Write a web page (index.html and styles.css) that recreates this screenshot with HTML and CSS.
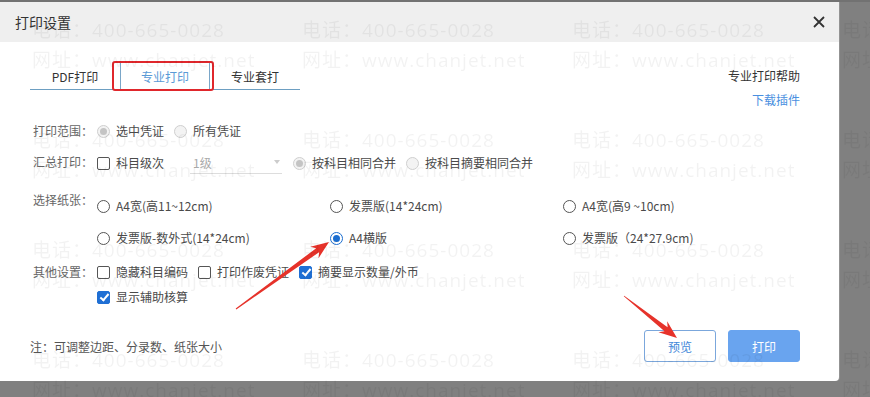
FILE: index.html
```html
<!DOCTYPE html>
<html lang="zh-CN">
<head>
    <meta charset="UTF-8">
    <title>打印设置</title>
    <link rel="stylesheet" href="styles.css">
</head>
<body>
    <div class="topbar"></div>
    <div class="dialog">
        <div class="dialog-head">
            <span class="dialog-title">打印设置</span>
            <a class="close" href="#"><svg width="12" height="12" viewBox="0 0 12 12"><path d="M1 1L11 11M11 1L1 11" stroke="#333" stroke-width="1.8" fill="none"/></svg></a>
        </div>
        <div class="dialog-body">
            <div class="top">
                <ul class="tabs">
                    <li>PDF打印</li>
                    <li class="active">专业打印<span class="mark"></span></li>
                    <li>专业套打</li>
                </ul>
                <div class="help">
                    <a href="#">专业打印帮助</a>
                    <a href="#" class="link">下载插件</a>
                </div>
            </div>

            <div class="form">
                <div class="row">
                    <span class="label">打印范围：</span>
                    <div class="opts">
                        <span class="opt"><i class="radio off on"></i>选中凭证</span>
                        <span class="opt"><i class="radio off"></i>所有凭证</span>
                    </div>
                </div>
                <div class="row row-sum">
                    <span class="label">汇总打印：</span>
                    <div class="opts">
                        <span class="opt"><i class="check"></i>科目级次</span>
                        <span class="select">1级<i class="caret"></i></span>
                        <span class="opt"><i class="radio off on"></i>按科目相同合并</span>
                        <span class="opt"><i class="radio off"></i>按科目摘要相同合并</span>
                    </div>
                </div>
                <div class="row row-paper">
                    <span class="label">选择纸张：</span>
                    <div class="paper">
                        <span class="opt"><i class="radio"></i>A4宽(高11~12cm)</span>
                        <span class="opt"><i class="radio"></i>发票版(14*24cm)</span>
                        <span class="opt"><i class="radio"></i>A4宽(高9 ~10cm)</span>
                        <span class="opt"><i class="radio"></i>发票版-数外式(14*24cm)</span>
                        <span class="opt"><i class="radio on"></i>A4横版</span>
                        <span class="opt"><i class="radio"></i>发票版（24*27.9cm)</span>
                    </div>
                </div>
                <div class="row row-other">
                    <span class="label">其他设置：</span>
                    <div class="opts wrap">
                        <span class="opt"><i class="check"></i>隐藏科目编码</span>
                        <span class="opt"><i class="check"></i>打印作废凭证</span>
                        <span class="opt"><i class="check on"></i>摘要显示数量/外币</span>
                        <span class="opt"><i class="check on"></i>显示辅助核算</span>
                    </div>
                </div>
            </div>

            <div class="foot">
                <span class="note">注：可调整边距、分录数、纸张大小</span>
                <div class="btns">
                    <a href="#" class="btn">预览</a>
                    <a href="#" class="btn btn-primary">打印</a>
                </div>
            </div>
        </div>
    </div>

    <!-- annotation arrows -->
    <svg class="arrows" width="870" height="397" viewBox="0 0 870 397">
        <polygon points="235.7,308.6 316.2,248.2 310.3,246.8 329,242 318.5,258.2 319.1,252.2 236.3,309.4" fill="#e6322a"/>
        <polygon points="624.2,295.7 667.6,327.3 667.2,321.3 677,338 658.5,332.3 664.5,331.3 623.8,296.3" fill="#e6322a"/>
    </svg>

    <div class="watermark">
        <div class="wm"><p>电话：400-665-0028</p><p>网址：www.chanjet.net</p></div>
        <div class="wm"><p>电话：400-665-0028</p><p>网址：www.chanjet.net</p></div>
        <div class="wm"><p>电话：400-665-0028</p><p>网址：www.chanjet.net</p></div>
        <div class="wm"><p>电话：400-665-0028</p><p>网址：www.chanjet.net</p></div>
        <div class="wm"><p>电话：400-665-0028</p><p>网址：www.chanjet.net</p></div>
        <div class="wm"><p>电话：400-665-0028</p><p>网址：www.chanjet.net</p></div>
        <div class="wm"><p>电话：400-665-0028</p><p>网址：www.chanjet.net</p></div>
        <div class="wm"><p>电话：400-665-0028</p><p>网址：www.chanjet.net</p></div>
        <div class="wm"><p>电话：400-665-0028</p><p>网址：www.chanjet.net</p></div>
        <div class="wm"><p>电话：400-665-0028</p><p>网址：www.chanjet.net</p></div>
        <div class="wm"><p>电话：400-665-0028</p><p>网址：www.chanjet.net</p></div>
        <div class="wm"><p>电话：400-665-0028</p><p>网址：www.chanjet.net</p></div>
        <div class="wm"><p>电话：400-665-0028</p><p>网址：www.chanjet.net</p></div>
        <div class="wm"><p>电话：400-665-0028</p><p>网址：www.chanjet.net</p></div>
        <div class="wm"><p>电话：400-665-0028</p><p>网址：www.chanjet.net</p></div>
        <div class="wm"><p>电话：400-665-0028</p><p>网址：www.chanjet.net</p></div>
    </div>
</body>
</html>
```

FILE: styles.css
```css
*{margin:0; padding:0; box-sizing:border-box;}
li{list-style:none;}
a{text-decoration:none; color:inherit;}
html,body{height:100%;}
body{background:#808080; font-family:"Noto Sans CJK SC","Liberation Sans",sans-serif; font-size:12px; color:#555; overflow:hidden;}

.topbar{height:2px; background:#727272;}

/* ========== dialog ========== */
.dialog{width:839px; height:379px; background:#fff; border-radius:0 0 4px 0; box-shadow:1px 0 0 rgba(255,255,255,.15);}
.dialog-head{height:40px; background:#efefef; display:flex; align-items:center; justify-content:space-between; padding:0 14px 0 15px;}
.dialog-title{font-size:14px; color:#333;}
.close{display:flex; width:12px; height:12px;}
.dialog-body{padding:21px 39px 0 30px;}

/* ========== tabs ========== */
.top{display:flex; justify-content:space-between; align-items:flex-start;}
.tabs{display:flex; width:270px; border-bottom:1px solid #6d9fc2;}
.tabs li{width:90px; height:26px; padding-top:4px; line-height:20px; text-align:center; color:#333;}
.tabs li.active{position:relative; color:#5a9ad6; border-left:1px solid #7aa6c8; border-right:1px solid #7aa6c8;}
.tabs .mark{position:absolute; left:-9px; right:-5px; top:-2px; bottom:-2px; border:2px solid #e0272c; border-radius:3px;}
.help{padding-top:3px; display:flex; flex-direction:column; align-items:flex-end; line-height:20px; color:#333;}
.help a + a{margin-top:4px;}
.help .link{color:#4a8fe0;}

/* ========== form ========== */
.form{padding-left:3px; margin-top:11px;}
.row{display:flex; align-items:flex-start;}
.row + .row{margin-top:11px;}
.row.row-paper{margin-top:16px;}
.row.row-other{margin-top:14px;}
.label{width:64px; flex:none; line-height:20px; color:#666;}
.opts{display:flex; align-items:center;}
.opts.wrap{width:340px; flex-wrap:wrap; row-gap:5px;}
.opt{display:flex; align-items:center; gap:6px; line-height:20px; margin-right:10px; white-space:nowrap; color:#4a4a4a;}
.paper{display:grid; grid-template-columns:repeat(3,233px); row-gap:12px; padding-top:6px;}

.radio{position:relative; width:13px; height:13px; border:1px solid #555; border-radius:50%; background:#fff; flex:none;}
.radio.on{border-color:#1a6dd0;}
.radio.on:after{content:""; position:absolute; left:2px; top:2px; width:7px; height:7px; border-radius:50%; background:#1a6dd0;}
.radio.off{border-color:#cfcfcf; background:#f3f3f3;}
.radio.off.on:after{background:#c4c4c4;}

.check{position:relative; width:13px; height:13px; border:1px solid #555; border-radius:2px; background:#fff; flex:none;}
.check.on{border-color:#1f6fd4; background:#1f6fd4;}
.check.on:after{content:""; position:absolute; left:3.5px; top:0.5px; width:3px; height:7px; border-right:2px solid #fff; border-bottom:2px solid #fff; transform:rotate(40deg);}

.select{position:relative; display:flex; align-items:center; width:92px; height:22px; margin:0 11px 0 16px; padding-left:3px; border-bottom:1px solid #ddd; color:#aaa;}
.caret{position:absolute; right:2px; top:8px; border-left:3px solid transparent; border-right:3px solid transparent; border-top:4px solid #ccc;}

/* ========== footer ========== */
.foot{display:flex; justify-content:space-between; align-items:center; margin-top:23px; height:32px;}
.note{color:#555;}
.btns{display:flex; gap:12px;}
.btn{display:flex; align-items:center; justify-content:center; width:72px; height:32px; border:1px solid #7ba7dc; border-radius:3px; color:#3f88d9; background:#fff;}
.btn-primary{background:#69a4ef; border-color:#69a4ef; color:#fff;}

/* ========== overlays ========== */
.arrows{position:fixed; left:0; top:0; z-index:4;}
.watermark{position:fixed; left:0; top:0; right:0; bottom:0; display:grid; grid-template-columns:repeat(4,270px); grid-auto-rows:110px; padding:15px 0 0 32px; pointer-events:none; z-index:5; overflow:hidden;}
.wm p{font-family:"Open Sans",sans-serif; font-size:19px; line-height:30px; letter-spacing:1px; white-space:nowrap; color:rgba(0,0,0,.05);}
```
